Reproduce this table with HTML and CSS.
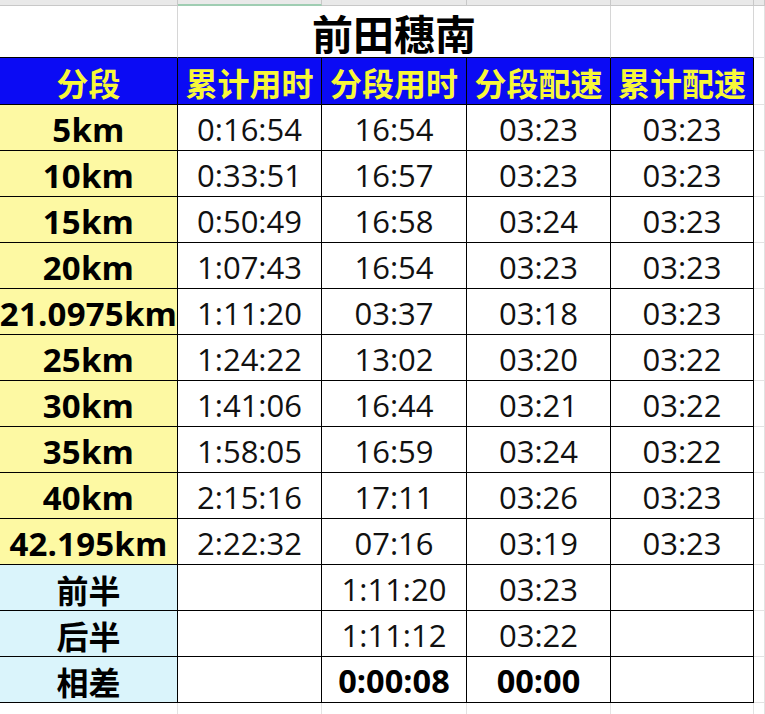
FILE: index.html
```html
<!DOCTYPE html>
<html lang="zh-CN">
<head>
<meta charset="utf-8">
<title>前田穗南</title>
<link rel="stylesheet" href="styles.css">
</head>
<body>
<div class="sheet">
  <div class="colhd"></div><div class="colhd sel"></div><div class="colhd"></div><div class="colhd"></div><div class="colhd"></div><div class="colhd last"></div>

  <div class="cell blank"></div>
  <div class="cell title">前田穗南</div>
  <div class="cell blank"></div>
  <div class="cell filler"></div>

  <div class="cell hd">分段</div><div class="cell hd">累计用时</div><div class="cell hd">分段用时</div><div class="cell hd">分段配速</div><div class="cell hd">累计配速</div><div class="cell filler"></div>

  <div class="cell lbl">5km</div><div class="cell">0:16:54</div><div class="cell">16:54</div><div class="cell">03:23</div><div class="cell">03:23</div><div class="cell filler"></div>
  <div class="cell lbl">10km</div><div class="cell">0:33:51</div><div class="cell">16:57</div><div class="cell">03:23</div><div class="cell">03:23</div><div class="cell filler"></div>
  <div class="cell lbl">15km</div><div class="cell">0:50:49</div><div class="cell">16:58</div><div class="cell">03:24</div><div class="cell">03:23</div><div class="cell filler"></div>
  <div class="cell lbl">20km</div><div class="cell">1:07:43</div><div class="cell">16:54</div><div class="cell">03:23</div><div class="cell">03:23</div><div class="cell filler"></div>
  <div class="cell lbl">21.0975km</div><div class="cell">1:11:20</div><div class="cell">03:37</div><div class="cell">03:18</div><div class="cell">03:23</div><div class="cell filler"></div>
  <div class="cell lbl">25km</div><div class="cell">1:24:22</div><div class="cell">13:02</div><div class="cell">03:20</div><div class="cell">03:22</div><div class="cell filler"></div>
  <div class="cell lbl">30km</div><div class="cell">1:41:06</div><div class="cell">16:44</div><div class="cell">03:21</div><div class="cell">03:22</div><div class="cell filler"></div>
  <div class="cell lbl">35km</div><div class="cell">1:58:05</div><div class="cell">16:59</div><div class="cell">03:24</div><div class="cell">03:22</div><div class="cell filler"></div>
  <div class="cell lbl">40km</div><div class="cell">2:15:16</div><div class="cell">17:11</div><div class="cell">03:26</div><div class="cell">03:23</div><div class="cell filler"></div>
  <div class="cell lbl">42.195km</div><div class="cell">2:22:32</div><div class="cell">07:16</div><div class="cell">03:19</div><div class="cell">03:23</div><div class="cell filler"></div>

  <div class="cell sum">前半</div><div class="cell"></div><div class="cell">1:11:20</div><div class="cell">03:23</div><div class="cell"></div><div class="cell filler"></div>
  <div class="cell sum">后半</div><div class="cell"></div><div class="cell">1:11:12</div><div class="cell">03:22</div><div class="cell"></div><div class="cell filler"></div>
  <div class="cell sum">相差</div><div class="cell"></div><div class="cell strong">0:00:08</div><div class="cell strong">00:00</div><div class="cell"></div><div class="cell filler"></div>

  <div class="cell tail"></div><div class="cell tail"></div><div class="cell tail"></div><div class="cell tail"></div><div class="cell tail"></div><div class="cell tail filler"></div>
</div>
</body>
</html>
```

FILE: styles.css
```css
html, body {
  margin: 0;
  padding: 0;
  background: #ffffff;
}

.sheet {
  display: grid;
  grid-template-columns: 178px 144px 145px 144px 143px 11px;
  grid-template-rows: 6px 52px 47px repeat(13, 46px) 11px;
  width: 765px;
  height: 714px;
  overflow: hidden;
  font-family: "Open Sans", "Noto Sans CJK SC", sans-serif;
  color: #111111;
}

.colhd {
  background: #e9e9e9;
  border-right: 1px solid #c8c8c8;
  border-bottom: 1px solid #c8c8c8;
  box-sizing: border-box;
}

.colhd.sel {
  border-bottom: 2px solid #9fcdb2;
}

.cell {
  box-sizing: border-box;
  border-right: 1px solid #000000;
  border-bottom: 1px solid #000000;
  display: flex;
  align-items: flex-end;
  justify-content: center;
  padding-bottom: 2px;
  font-size: 31px;
  line-height: 38px;
  white-space: nowrap;
  overflow: hidden;
}

.blank {
  border-right: 1px solid #d6d6d6;
  border-bottom: 1px solid #000000;
}

.title {
  grid-column: 2 / span 3;
  border-right: 1px solid #d6d6d6;
  font-family: "Noto Sans CJK SC", sans-serif;
  font-weight: 700;
  font-size: 41px;
  line-height: 50px;
  padding-bottom: 0;
  overflow: visible;
  color: #000000;
}

.filler {
  border-right: 1px solid #e2e2e2;
  border-bottom: 1px solid #e2e2e2;
}

.hd {
  background: #0b0bf4;
  color: #f7f73a;
  font-family: "Noto Sans CJK SC", sans-serif;
  font-weight: 700;
  font-size: 32px;
  line-height: 40px;
  padding-bottom: 2px;
}

.lbl {
  background: #fdf9a3;
  font-weight: 700;
  font-size: 33px;
  letter-spacing: 0.2px;
  color: #000000;
  padding-bottom: 1px;
}

.sum {
  background: #daf4fb;
  font-family: "Noto Sans CJK SC", sans-serif;
  font-weight: 700;
  font-size: 32px;
  color: #000000;
}

.strong {
  font-weight: 700;
  font-size: 32.5px;
  color: #000000;
}

.tail {
  border-right: 1px solid #e2e2e2;
  border-bottom: none;
}
```
